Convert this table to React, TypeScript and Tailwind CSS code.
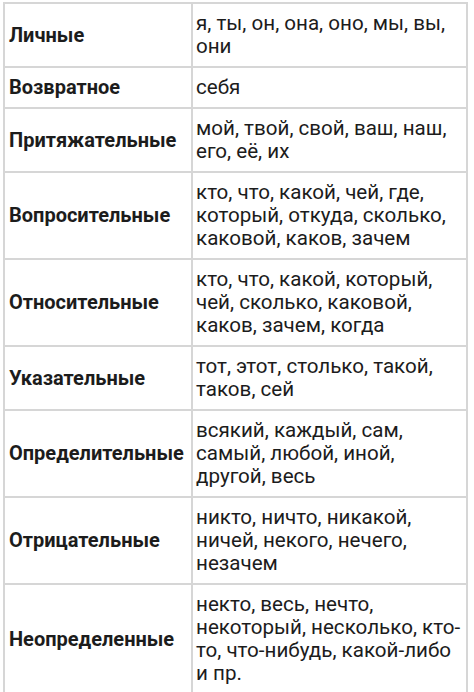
const rows: { name: string; lines: string[] }[] = [
  { name: 'Личные', lines: ['я, ты, он, она, оно, мы, вы,', 'они'] },
  { name: 'Возвратное', lines: ['себя'] },
  { name: 'Притяжательные', lines: ['мой, твой, свой, ваш, наш,', 'его, её, их'] },
  {
    name: 'Вопросительные',
    lines: ['кто, что, какой, чей, где,', 'который, откуда, сколько,', 'каковой, каков, зачем'],
  },
  {
    name: 'Относительные',
    lines: ['кто, что, какой, который,', 'чей, сколько, каковой,', 'каков, зачем, когда'],
  },
  { name: 'Указательные', lines: ['тот, этот, столько, такой,', 'таков, сей'] },
  {
    name: 'Определительные',
    lines: ['всякий, каждый, сам,', 'самый, любой, иной,', 'другой, весь'],
  },
  {
    name: 'Отрицательные',
    lines: ['никто, ничто, никакой,', 'ничей, некого, нечего,', 'незачем'],
  },
  {
    name: 'Неопределенные',
    lines: ['некто, весь, нечто,', 'некоторый, несколько, кто-', 'то, что-нибудь, какой-либо', 'и пр.'],
  },
];

export default function App() {
  return (
    <div
      className="w-[474px] h-[692px] overflow-hidden bg-white pt-[2px] pl-[3px]"
      style={{ fontFamily: 'Roboto, "Noto Sans", sans-serif' }}
    >
      <table className="border-collapse w-[465px] text-[#1c1c1c]">
        <tbody>
          {rows.map((row) => (
            <tr key={row.name}>
              <td className="w-[188px] border-2 border-[#d6d6d6] pl-1 pr-0 py-2 align-middle text-[20px] leading-[23px] font-bold whitespace-nowrap">
                {row.name}
              </td>
              <td className="border-2 border-[#d6d6d6] pl-[3px] pr-1 py-2 align-top text-[20.6px] leading-[23px] whitespace-nowrap">
                {row.lines.map((line, i) => (
                  <div key={i}>{line}</div>
                ))}
              </td>
            </tr>
          ))}
        </tbody>
      </table>
    </div>
  );
}
